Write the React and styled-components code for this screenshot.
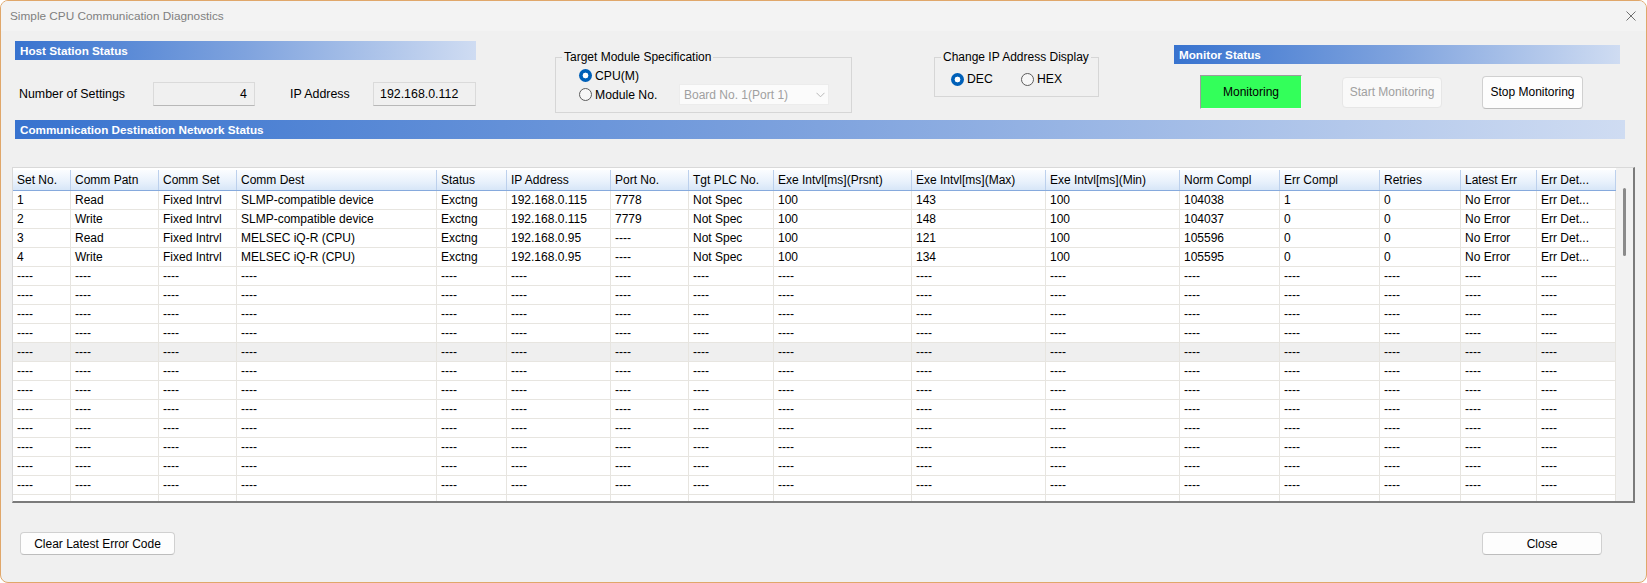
import React from "react";
import styled, { createGlobalStyle } from "styled-components";

const GlobalStyle = createGlobalStyle`
  html, body { margin: 0; padding: 0; background: #ffffff; }
  body { font-family: "Liberation Sans", Arial, sans-serif; font-size: 12px; color: #000; }
  * { box-sizing: border-box; }
`;

const Window = styled.div`
  width: 1647px;
  height: 583px;
  border: 1px solid #e0a76a;
  border-radius: 8px;
  background: #f0f0f0;
  overflow: hidden;
  display: flex;
  flex-direction: column;
`;

const TitleBar = styled.div`
  height: 30px;
  flex: none;
  background: #f3f3f3;
  display: flex;
  align-items: center;
  justify-content: space-between;
  padding: 0 10px 0 9px;
  color: #7f7f7f;
  font-size: 11.8px;
`;

const CloseIcon = styled.svg`
  width: 10px;
  height: 10px;
  display: block;
`;

const TopRow = styled.div`
  height: 89px;
  flex: none;
  display: flex;
  align-items: flex-start;
  padding-left: 14px;
`;

const HostColumn = styled.div`
  width: 461px;
  margin-top: 10px;
`;

const SectionBar = styled.div`
  height: 19px;
  width: ${(p) => p.$width}px;
  margin-left: ${(p) => p.$indent || 0}px;
  display: flex;
  align-items: center;
  padding-left: 5px;
  color: #ffffff;
  font-weight: bold;
  font-size: 11.7px;
  background: linear-gradient(90deg, #3873cf 0%, #7fa3de 50%, #cfdcf2 100%);
  flex: none;
`;

const FieldRow = styled.div`
  margin-top: 22px;
  display: flex;
  align-items: center;
  height: 24px;
`;

const FieldLabel = styled.div`
  width: ${(p) => p.$width}px;
  padding-left: ${(p) => p.$pad}px;
  white-space: nowrap;
  font-size: 12.4px;
`;

const ReadBox = styled.div`
  width: ${(p) => p.$width}px;
  height: 24px;
  display: flex;
  align-items: center;
  justify-content: ${(p) => (p.$right ? "flex-end" : "flex-start")};
  padding: 0 ${(p) => (p.$right ? 7 : 6)}px;
  background: #f0f0f0;
  border: 1px solid #dadada;
  border-bottom-color: #b8b8b8;
  font-size: 12.4px;
`;

const Group = styled.fieldset`
  margin: ${(p) => p.$top}px 0 0 ${(p) => p.$left}px;
  width: ${(p) => p.$width}px;
  border: 1px solid #d6d6d6;
  padding: 0;
  min-width: 0;
`;

const Legend = styled.legend`
  margin-left: 6px;
  padding: 0 2px;
  font-size: 12px;
  line-height: 14px;
  white-space: nowrap;
`;

const TargetGrid = styled.div`
  display: grid;
  grid-template-columns: 100px 150px;
  grid-template-rows: 17px 21px;
  align-items: center;
  padding: 3px 0 7px 23px;
`;

const RadioItem = styled.label`
  display: flex;
  align-items: center;
  gap: 3px;
  width: ${(p) => (p.$width ? `${p.$width}px` : "auto")};
  white-space: nowrap;
  font-size: 12.2px;
`;

const RadioDot = styled.span`
  width: 13px;
  height: 13px;
  border-radius: 50%;
  flex: none;
  ${(p) =>
    p.$on
      ? `background: radial-gradient(circle, #ffffff 0 2.6px, #0060b8 3.2px);`
      : `background: #f7f7f7; border: 1px solid #5c5c5c;`}
`;

const Combo = styled.div`
  width: 150px;
  height: 21px;
  display: flex;
  align-items: center;
  justify-content: space-between;
  padding: 0 3px 0 4px;
  background: #fbfbfb;
  border: 1px solid #ececec;
  color: #a0a0a0;
`;

const RadioRow = styled.div`
  display: flex;
  align-items: center;
  height: 18px;
  box-sizing: content-box;
  padding: 6px 0 8px 16px;
`;

const MonitorColumn = styled.div`
  width: 446px;
  margin: 14px 0 0 75px;
`;

const ButtonRow = styled.div`
  margin-top: 11px;
  display: flex;
  align-items: center;
  padding-left: 26px;
  gap: 40px;
`;

const StatusLamp = styled.div`
  width: 102px;
  height: 34px;
  display: flex;
  align-items: center;
  justify-content: center;
  background: #33ff5a;
  border: 1px solid;
  border-color: #9c9c9c #f4f4f4 #f4f4f4 #9c9c9c;
`;

const Button = styled.button`
  width: ${(p) => p.$width}px;
  height: ${(p) => p.$height || 23}px;
  font-family: "Liberation Sans", Arial, sans-serif;
  font-size: 12px;
  padding: 0;
  border-radius: 4px;
  border: 1px solid ${(p) => (p.disabled ? "#e6e6e6" : "#d0d0d0")};
  border-bottom-color: ${(p) => (p.disabled ? "#e6e6e6" : "#bdbdbd")};
  background: ${(p) => (p.disabled ? "#f9f9f9" : "#fdfdfd")};
  color: ${(p) => (p.disabled ? "#a0a0a0" : "#000000")};
`;

const Table = styled.div`
  margin: 28px 0 0 11px;
  width: 1623px;
  height: 336px;
  flex: none;
  display: flex;
  background: #ffffff;
  border-top: 1px solid #d9d9d9;
  border-left: 1px solid #d9d9d9;
  border-right: 2px solid #7b7b7b;
  border-bottom: 2px solid #7b7b7b;
`;

const GridArea = styled.div`
  width: 1603px;
  padding-top: 2px;
  display: flex;
  flex-direction: column;
  overflow: hidden;
`;

const RowGrid = styled.div`
  display: grid;
  grid-template-columns: ${(p) => p.$cols};
  height: ${(p) => (p.$head ? 21 : 19)}px;
  flex: none;
  background: ${(p) =>
    p.$head
      ? "linear-gradient(180deg, #fbfdff 0%, #eaf2fc 55%, #d7e6f8 100%)"
      : p.$gray
      ? "#efefef"
      : "#ffffff"};
  border-bottom: ${(p) => (p.$head ? "1px solid #86aadd" : "none")};
`;

const Cell = styled.div`
  display: flex;
  align-items: center;
  padding-left: 4px;
  white-space: nowrap;
  overflow: hidden;
  border-right: 1px solid ${(p) => (p.$head ? "#bcd0ec" : "#e7e5e0")};
  border-bottom: ${(p) => (p.$head ? "none" : "1px solid #e7e5e0")};
`;

const ScrollTrack = styled.div`
  width: 17px;
  background: #f2f2f2;
  display: flex;
  justify-content: center;
  padding-top: 20px;
`;

const Thumb = styled.div`
  width: 3px;
  height: 68px;
  border-radius: 2px;
  background: #8a8a8a;
`;

const BottomRow = styled.div`
  margin-top: 29px;
  display: flex;
  justify-content: space-between;
  padding: 0 44px 0 19px;
`;

const COLS = [58, 88, 78, 200, 70, 104, 78, 85, 138, 134, 134, 100, 100, 81, 76, 79];
const colTemplate = COLS.map((c) => `${c}px`).join(" ");

const HEAD = [
  "Set No.",
  "Comm Patn",
  "Comm Set",
  "Comm Dest",
  "Status",
  "IP Address",
  "Port No.",
  "Tgt PLC No.",
  "Exe Intvl[ms](Prsnt)",
  "Exe Intvl[ms](Max)",
  "Exe Intvl[ms](Min)",
  "Norm Compl",
  "Err Compl",
  "Retries",
  "Latest Err",
  "Err Det...",
];

const DATA = [
  ["1", "Read", "Fixed Intrvl", "SLMP-compatible device", "Exctng", "192.168.0.115", "7778", "Not Spec", "100", "143", "100", "104038", "1", "0", "No Error", "Err Det..."],
  ["2", "Write", "Fixed Intrvl", "SLMP-compatible device", "Exctng", "192.168.0.115", "7779", "Not Spec", "100", "148", "100", "104037", "0", "0", "No Error", "Err Det..."],
  ["3", "Read", "Fixed Intrvl", "MELSEC iQ-R (CPU)", "Exctng", "192.168.0.95", "----", "Not Spec", "100", "121", "100", "105596", "0", "0", "No Error", "Err Det..."],
  ["4", "Write", "Fixed Intrvl", "MELSEC iQ-R (CPU)", "Exctng", "192.168.0.95", "----", "Not Spec", "100", "134", "100", "105595", "0", "0", "No Error", "Err Det..."],
];

const DASH_ROW = COLS.map(() => "----");
const BLANK_ROW = COLS.map(() => "");
const ROWS = [...DATA, ...Array.from({ length: 12 }, () => DASH_ROW), BLANK_ROW];

export default function App() {
  return (
    <>
      <GlobalStyle />
      <Window>
        <TitleBar>
          <span>Simple CPU Communication Diagnostics</span>
          <CloseIcon viewBox="0 0 10 10">
            <path d="M0.5 0.5 L9.5 9.5 M9.5 0.5 L0.5 9.5" stroke="#6f6f6f" strokeWidth="1" fill="none" />
          </CloseIcon>
        </TitleBar>

        <TopRow>
          <HostColumn>
            <SectionBar $width={461}>Host Station Status</SectionBar>
            <FieldRow>
              <FieldLabel $width={138} $pad={4}>Number of Settings</FieldLabel>
              <ReadBox $width={102} $right>4</ReadBox>
              <FieldLabel $width={118} $pad={35}>IP Address</FieldLabel>
              <ReadBox $width={103}>192.168.0.112</ReadBox>
            </FieldRow>
          </HostColumn>

          <Group $top={19} $left={79} $width={297}>
            <Legend>Target Module Specification</Legend>
            <TargetGrid>
              <RadioItem>
                <RadioDot $on />
                CPU(M)
              </RadioItem>
              <span />
              <RadioItem>
                <RadioDot />
                Module No.
              </RadioItem>
              <Combo>
                <span>Board No. 1(Port 1)</span>
                <svg width="9" height="6" viewBox="0 0 9 6">
                  <polyline points="0.5,0.8 4.5,4.8 8.5,0.8" fill="none" stroke="#b8b8b8" strokeWidth="1" />
                </svg>
              </Combo>
            </TargetGrid>
          </Group>

          <Group $top={19} $left={82} $width={165}>
            <Legend>Change IP Address Display</Legend>
            <RadioRow>
              <RadioItem $width={70}>
                <RadioDot $on />
                DEC
              </RadioItem>
              <RadioItem>
                <RadioDot />
                HEX
              </RadioItem>
            </RadioRow>
          </Group>

          <MonitorColumn>
            <SectionBar $width={446}>Monitor Status</SectionBar>
            <ButtonRow>
              <StatusLamp>Monitoring</StatusLamp>
              <Button $width={100} $height={31} disabled>
                Start Monitoring
              </Button>
              <Button $width={101} $height={33}>Stop Monitoring</Button>
            </ButtonRow>
          </MonitorColumn>
        </TopRow>

        <SectionBar $width={1610} $indent={14}>
          Communication Destination Network Status
        </SectionBar>

        <Table>
          <GridArea>
            <RowGrid $cols={colTemplate} $head>
              {HEAD.map((h) => (
                <Cell key={h} $head>
                  {h}
                </Cell>
              ))}
            </RowGrid>
            {ROWS.map((row, i) => (
              <RowGrid key={i} $cols={colTemplate} $gray={i === 8}>
                {row.map((v, j) => (
                  <Cell key={j}>{v}</Cell>
                ))}
              </RowGrid>
            ))}
          </GridArea>
          <ScrollTrack>
            <Thumb />
          </ScrollTrack>
        </Table>

        <BottomRow>
          <Button $width={155}>Clear Latest Error Code</Button>
          <Button $width={120}>Close</Button>
        </BottomRow>
      </Window>
    </>
  );
}
